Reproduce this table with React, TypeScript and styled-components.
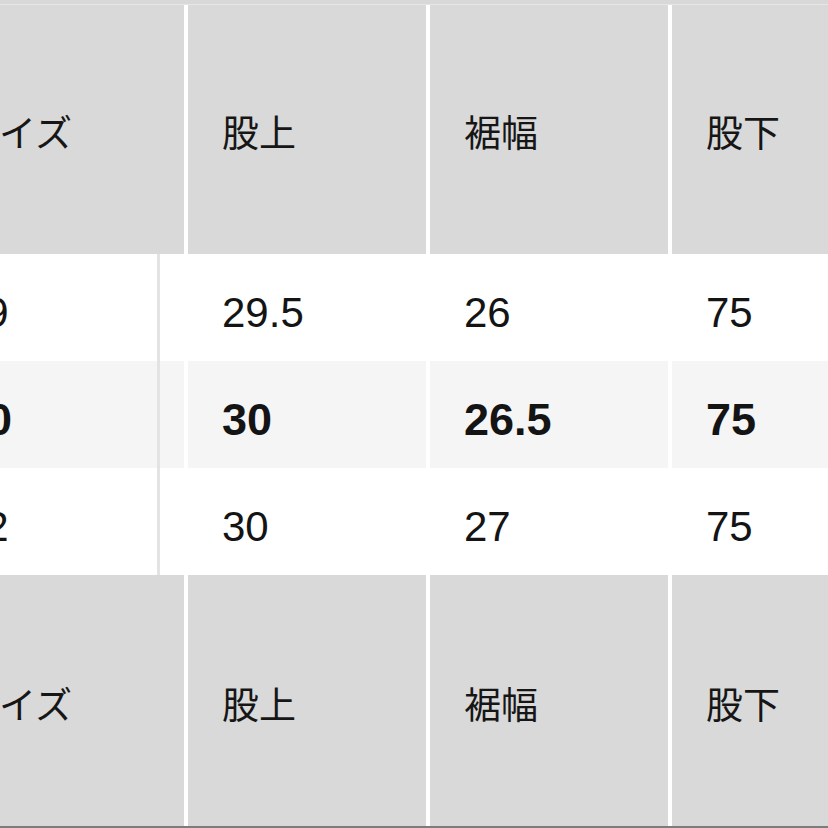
import styled, { createGlobalStyle, css } from "styled-components";

const GlobalStyle = createGlobalStyle`
	html, body {
		margin: 0;
		padding: 0;
		background: #ffffff;
	}
	body {
		width: 828px;
		height: 828px;
		overflow: hidden;
		font-family: "Liberation Sans", "Noto Sans CJK JP", sans-serif;
		color: #111111;
	}
`;

const COLUMNS = "256px 238px 238px 240px";

const Viewport = styled.div`
	width: 828px;
	height: 828px;
	overflow: hidden;
	background: #ffffff;
`;

// the table is scrolled sideways, so the size column is partly out of view
const Table = styled.div`
	display: flex;
	flex-direction: column;
	width: max-content;
	margin-left: -72px;
`;

const TopStrip = styled.div`
	height: 4px;
	background: #d8d8d8;
	border-bottom: 1px solid #e6e6e6;
`;

const HeadRow = styled.div<{ $height: number }>`
	display: grid;
	grid-template-columns: ${COLUMNS};
	column-gap: 4px;
	background: #ffffff;
	${({ $height }) => css`
		height: ${$height}px;
	`}
`;

const HeadCell = styled.div<{ $shift: number }>`
	display: flex;
	align-items: center;
	padding-left: 34px;
	padding-top: ${({ $shift }) => $shift}px;
	background: #d9d9d9;
	font-family: "Noto Sans CJK JP", "Noto Sans", sans-serif;
	font-size: 37px;
	font-weight: 400;
	color: #161616;
`;

const BodyRow = styled.div`
	display: grid;
	grid-template-columns: ${COLUMNS};
	column-gap: 4px;
	height: 107px;
	background: #ffffff;
`;

const BodyCell = styled.div<{ $shade: boolean; $bold: boolean }>`
	display: flex;
	align-items: center;
	padding: 10px 0 0 34px;
	box-sizing: border-box;
	background: ${({ $shade }) => ($shade ? "#f5f5f5" : "#ffffff")};
	font-family: "Liberation Sans", Arial, sans-serif;
	${({ $bold }) =>
		$bold
			? css`
					font-size: 45px;
					font-weight: 700;
			  `
			: css`
					font-size: 42px;
					font-weight: 400;
			  `}
	color: #141414;
`;

const SizeCell = styled(BodyCell)`
	padding: 0;
`;

const SizeLabel = styled.div`
	display: flex;
	align-items: center;
	width: 232px;
	height: 100%;
	padding: 10px 0 0 34px;
	box-sizing: border-box;
	border-right: 3px solid #e3e3e3;
`;

const Footer = styled.div`
	height: 3px;
	background: #7c7c7c;
`;

const HEADERS = ["サイズ", "股上", "裾幅", "股下"];

const ROWS = [
	{ size: "69", values: ["29.5", "26", "75"], bold: false },
	{ size: "70", values: ["30", "26.5", "75"], bold: true },
	{ size: "72", values: ["30", "27", "75"], bold: false },
];

const Header = ({ height, shift }: { height: number; shift: number }) => (
	<HeadRow $height={height}>
		{HEADERS.map((label) => (
			<HeadCell key={label} $shift={shift}>
				{label}
			</HeadCell>
		))}
	</HeadRow>
);

const App = () => {
	return (
		<>
			<GlobalStyle />
			<Viewport>
				<Table>
					<TopStrip />
					<Header height={249} shift={2} />
					{ROWS.map((row, i) => {
						const shade = i === 1;
						return (
							<BodyRow key={row.size}>
								<SizeCell $shade={shade} $bold={row.bold}>
									<SizeLabel>{row.size}</SizeLabel>
								</SizeCell>
								{row.values.map((v, j) => (
									<BodyCell key={j} $shade={shade} $bold={row.bold}>
										{v}
									</BodyCell>
								))}
							</BodyRow>
						);
					})}
					<Header height={251} shift={4} />
					<Footer />
				</Table>
			</Viewport>
		</>
	);
};

export default App;
